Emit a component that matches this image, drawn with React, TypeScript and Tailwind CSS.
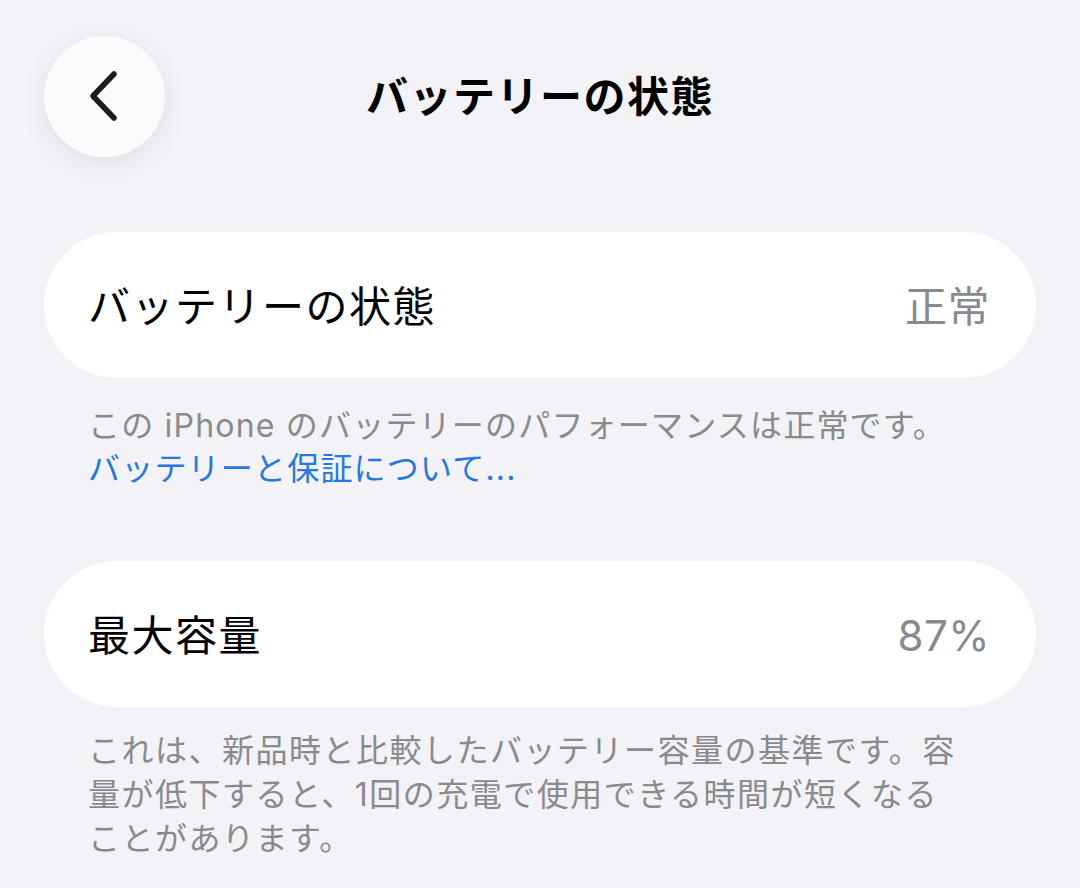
const font = { fontFamily: 'Inter, "Noto Sans CJK JP", sans-serif' };

function BackButton() {
  return (
    <button className="flex h-[121px] w-[121px] items-center justify-center rounded-full bg-[#fbfbfd] shadow-[0_6px_28px_rgba(0,0,0,0.08)]">
      <svg width="44" height="60" viewBox="0 0 44 60" fill="none">
        <path d="M31 7 L10 29 L31 51" stroke="#1c1c1e" strokeWidth="5.5" strokeLinecap="round" strokeLinejoin="round" />
      </svg>
    </button>
  );
}

function Row({ label, value }: { label: string; value: string }) {
  return (
    <div className="flex h-[146px] items-center justify-between rounded-full bg-white pl-[44px] pr-[46px]">
      <span className="pt-[3px] text-[42px] tracking-[1.5px] text-black">{label}</span>
      <span className="pt-[3px] text-[42px] tracking-[0.5px] text-[#8a8a8e]">{value}</span>
    </div>
  );
}

export default function App() {
  return (
    <div className="min-h-screen w-[1080px] bg-[#f2f2f7]" style={font}>
      {/* header */}
      <div className="relative flex items-center justify-center pt-[36px]">
        <div className="absolute left-[44px] top-[36px]">
          <BackButton />
        </div>
        <h1 className="flex h-[121px] items-center text-[42px] font-bold tracking-[1.5px] text-black">バッテリーの状態</h1>
      </div>

      <div className="px-[44px] pt-[75px]">
        <Row label="バッテリーの状態" value="正常" />
        <div className="px-[44px] pt-[26px] text-[32px] leading-[43px] tracking-[1.2px]">
          <p className="text-[#8a8a8e]">この iPhone のバッテリーのパフォーマンスは正常です。</p>
          <p className="text-[#2679db]">バッテリーと保証について...</p>
        </div>

        <div className="pt-[71px]">
          <Row label="最大容量" value="87%" />
        </div>
        <p className="px-[44px] pt-[22px] text-[32px] leading-[44px] tracking-[1.5px] text-[#8a8a8e]">
          これは、新品時と比較したバッテリー容量の基準です。容
          <br />
          量が低下すると、1回の充電で使用できる時間が短くなる
          <br />
          ことがあります。
        </p>
      </div>
    </div>
  );
}
